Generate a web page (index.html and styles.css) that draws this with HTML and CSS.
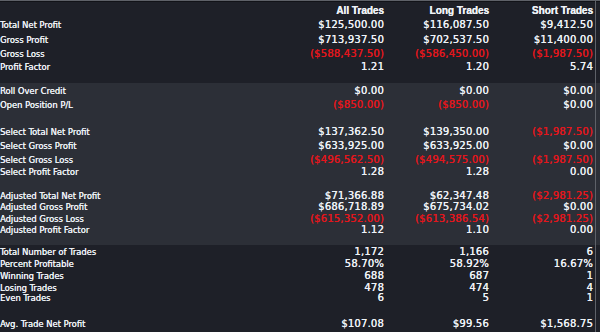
FILE: index.html
```html
<!DOCTYPE html>
<html>
<head>
<meta charset="utf-8">
<link rel="stylesheet" href="styles.css">
</head>
<body>
<div class="sheet">
  <section class="band band-dark band-top">
    <div class="row head h14"><span class="label"></span><span class="val">All Trades</span><span class="val">Long Trades</span><span class="val">Short Trades</span></div>
    <div class="row h14"><span class="label">Total Net Profit</span><span class="val">$125,500.00</span><span class="val">$116,087.50</span><span class="val">$9,412.50</span></div>
    <div class="row h15"><span class="label">Gross Profit</span><span class="val">$713,937.50</span><span class="val">$702,537.50</span><span class="val">$11,400.00</span></div>
    <div class="row h13"><span class="label">Gross Loss</span><span class="val neg">($588,437.50)</span><span class="val neg">($586,450.00)</span><span class="val neg">($1,987.50)</span></div>
    <div class="row h13"><span class="label">Profit Factor</span><span class="val">1.21</span><span class="val">1.20</span><span class="val">5.74</span></div>
  </section>
  <section class="band band-light band-mid">
    <div class="row h14"><span class="label">Roll Over Credit</span><span class="val">$0.00</span><span class="val">$0.00</span><span class="val">$0.00</span></div>
    <div class="row h14"><span class="label">Open Position P/L</span><span class="val neg">($850.00)</span><span class="val neg">($850.00)</span><span class="val">$0.00</span></div>
    <div class="spacer h13"></div>
    <div class="row h14"><span class="label">Select Total Net Profit</span><span class="val">$137,362.50</span><span class="val">$139,350.00</span><span class="val neg">($1,987.50)</span></div>
    <div class="row h14"><span class="label">Select Gross Profit</span><span class="val">$633,925.00</span><span class="val">$633,925.00</span><span class="val">$0.00</span></div>
    <div class="row h13"><span class="label">Select Gross Loss</span><span class="val neg">($496,562.50)</span><span class="val neg">($494,575.00)</span><span class="val neg">($1,987.50)</span></div>
    <div class="row h12"><span class="label">Select Profit Factor</span><span class="val">1.28</span><span class="val">1.28</span><span class="val">0.00</span></div>
    <div class="spacer h12"></div>
    <div class="row h11"><span class="label">Adjusted Total Net Profit</span><span class="val">$71,366.88</span><span class="val">$62,347.48</span><span class="val neg">($2,981.25)</span></div>
    <div class="row h12"><span class="label">Adjusted Gross Profit</span><span class="val">$686,718.89</span><span class="val">$675,734.02</span><span class="val">$0.00</span></div>
    <div class="row h11"><span class="label">Adjusted Gross Loss</span><span class="val neg">($615,352.00)</span><span class="val neg">($613,386.54)</span><span class="val neg">($2,981.25)</span></div>
    <div class="row h11"><span class="label">Adjusted Profit Factor</span><span class="val">1.12</span><span class="val">1.10</span><span class="val">0.00</span></div>
  </section>
  <section class="band band-dark band-bottom">
    <div class="row h13"><span class="label">Total Number of Trades</span><span class="val">1,172</span><span class="val">1,166</span><span class="val">6</span></div>
    <div class="row h12"><span class="label">Percent Profitable</span><span class="val">58.70%</span><span class="val">58.92%</span><span class="val">16.67%</span></div>
    <div class="row h12"><span class="label">Winning Trades</span><span class="val">688</span><span class="val">687</span><span class="val">1</span></div>
    <div class="row h11"><span class="label">Losing Trades</span><span class="val">478</span><span class="val">474</span><span class="val">4</span></div>
    <div class="row h10"><span class="label">Even Trades</span><span class="val">6</span><span class="val">5</span><span class="val">1</span></div>
    <div class="spacer h15"></div>
    <div class="row h12"><span class="label">Avg. Trade Net Profit</span><span class="val">$107.08</span><span class="val">$99.56</span><span class="val">$1,568.75</span></div>
  </section>
</div>
</body>
</html>
```

FILE: styles.css
```css
html, body {
  margin: 0;
  padding: 0;
  background: #1e2028;
}
.sheet {
  position: relative;
  width: 600px;
  height: 332px;
  overflow: hidden;
  border-top: 1px solid #5e6168;
  box-sizing: border-box;
  color: #eef2f7;
}
.sheet::after {
  content: "";
  position: absolute;
  top: 0;
  bottom: 0;
  left: 595px;
  width: 1px;
  background: #5e6168;
}
.band {
  display: flex;
  flex-direction: column;
}
.band-dark { background: #1e2028; }
.band-light { background: #2c2f37; }
.band-top {
  border-top: 1px solid #121318;
  padding-top: 2px;
  padding-bottom: 10px;
}
.band-mid {
  padding-top: 1px;
  padding-bottom: 10px;
}
.row {
  display: grid;
  grid-template-columns: 1fr 105px 105px 104px;
  padding-right: 7px;
  white-space: nowrap;
  text-shadow: 0.2px 0 0 currentColor;
}
.label {
  font-family: "DejaVu Sans Condensed", "DejaVu Sans", sans-serif;
  font-stretch: condensed;
  font-size: 9.3px;
}
.val {
  text-align: right;
  font-family: "DejaVu Sans", Verdana, sans-serif;
  font-size: 10px;
  letter-spacing: 0.2px;
}
.head .val {
  font-family: "Liberation Sans", Arial, sans-serif;
  font-weight: bold;
  font-size: 10px;
  letter-spacing: 0;
}
.neg { color: #e3161c; }
.h10 { height: 10px; line-height: 10px; }
.h11 { height: 11px; line-height: 11px; }
.h12 { height: 12px; line-height: 12px; }
.h13 { height: 13px; line-height: 13px; }
.h14 { height: 14px; line-height: 14px; }
.h15 { height: 15px; line-height: 15px; }
```
